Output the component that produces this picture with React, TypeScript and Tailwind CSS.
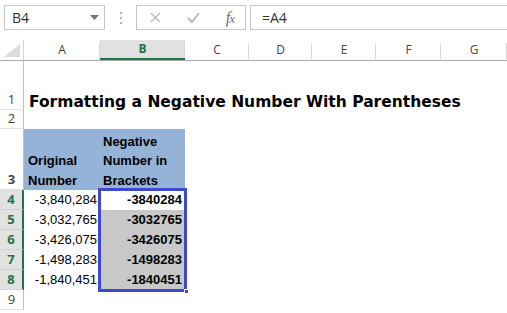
import React from 'react'

const COLS = [
  { key: 'A', w: 'w-[76px]' },
  { key: 'B', w: 'w-[85px]' },
  { key: 'C', w: 'w-[64px]' },
  { key: 'D', w: 'w-[63px]' },
  { key: 'E', w: 'w-[64px]' },
  { key: 'F', w: 'w-[65px]' },
  { key: 'G', w: 'w-[66px]' },
]

const DATA = [
  { n: 4, a: '-3,840,284', b: '-3840284' },
  { n: 5, a: '-3,032,765', b: '-3032765' },
  { n: 6, a: '-3,426,075', b: '-3426075' },
  { n: 7, a: '-1,498,283', b: '-1498283' },
  { n: 8, a: '-1,840,451', b: '-1840451' },
]

const uiFont = "font-['Open_Sans','Noto_Sans',sans-serif]"
const cellFont = "font-['Liberation_Sans',Arial,sans-serif]"

function RowHead({ n, active, h }: { n: number | string; active?: boolean; h: string }) {
  return (
    <div
      className={`w-[24px] shrink-0 ${h} flex items-end justify-center pb-[1px] text-[13px] leading-[18px] ${uiFont} border-b border-[#e1e1e1] ${
        active
          ? 'bg-[#e1e1e1] text-[#217346] font-bold border-r-2 border-r-[#217346] border-b-[#d4d4d4]'
          : 'bg-white text-[#444] border-r border-r-[#c0c0c0]'
      }`}
    >
      {n}
    </div>
  )
}

export default function App() {
  return (
    <div className="w-[507px] h-[313px] bg-white overflow-hidden relative">
      {/* formula bar */}
      <div className="h-[40px] flex items-start pt-[5px] pl-[4px]">
        <div className={`w-[101px] h-[25px] border border-[#c6c6c6] flex items-center justify-between pl-[7px] pr-[5px] text-[14px] text-[#333] ${uiFont}`}>
          <span>B4</span>
          <svg width="9" height="5" viewBox="0 0 9 5"><path d="M0 0h9L4.5 5z" fill="#777" /></svg>
        </div>
        <div className="w-[31px] h-[25px] flex items-center justify-center">
          <div className="flex flex-col gap-[3px]">
            <span className="w-[2px] h-[2px] bg-[#b5b5b5]" />
            <span className="w-[2px] h-[2px] bg-[#b5b5b5]" />
            <span className="w-[2px] h-[2px] bg-[#b5b5b5]" />
          </div>
        </div>
        <div className="w-[110px] h-[25px] border border-[#c6c6c6] flex items-center justify-between pl-[13px] pr-[11px]">
          <svg width="11" height="11" viewBox="0 0 11 11"><path d="M1 1l9 9M10 1l-9 9" stroke="#b8b8b8" strokeWidth="1.4" /></svg>
          <svg width="13" height="11" viewBox="0 0 13 11"><path d="M1 6l4 4 7-9" stroke="#b8b8b8" strokeWidth="2" fill="none" /></svg>
          <span className="text-[16px] leading-none italic text-[#707070] font-['Liberation_Serif',serif] tracking-[-1px]">
            f<span className="text-[13px]">x</span>
          </span>
        </div>
        <div className={`ml-[4px] flex-1 h-[25px] border border-[#c6c6c6] border-r-0 flex items-center pl-[11px] text-[14px] text-[#333] ${uiFont}`}>
          =A4
        </div>
      </div>

      {/* column headers */}
      <div className="flex h-[21px] border-b border-[#ababab]">
        <div className="w-[24px] shrink-0 flex items-end justify-end pr-[3px] pb-[3px] border-r border-[#d4d4d4]">
          <svg width="16" height="13" viewBox="0 0 16 13"><path d="M16 0V13H0z" fill="#dcdcdc" /></svg>
        </div>
        {COLS.map(c => (
          <div
            key={c.key}
            className={`${c.w} shrink-0 flex items-center justify-center text-[12px] ${uiFont} relative ${
              c.key === 'B' ? 'bg-[#e1e1e1] text-[#217346] font-bold border-b-2 border-[#217346]' : 'text-[#444]'
            }`}
          >
            {c.key}
            <span className="absolute right-0 top-[3px] bottom-[1px] w-px bg-[#d8d8d8]" />
          </div>
        ))}
      </div>

      {/* row 1 */}
      <div className="flex h-[49px]">
        <RowHead n={1} h="h-[49px]" />
        <div className="flex items-end pl-[5px] pb-0 whitespace-nowrap text-[15.5px] leading-[16px] font-bold text-black font-['DejaVu_Sans',Verdana,sans-serif]">
          Formatting a Negative Number With Parentheses
        </div>
      </div>

      {/* row 2 */}
      <div className="flex h-[19px]">
        <RowHead n={2} h="h-[19px]" />
      </div>

      {/* row 3 */}
      <div className={`flex h-[61px] text-[13px] font-bold text-black leading-[19.5px] ${cellFont}`}>
        <RowHead n={3} h="h-[61px]" />
        <div className="w-[76px] h-[61px] bg-[#95b3d7] flex items-end pl-[4px] pb-0">
          <span>Original<br />Number</span>
        </div>
        <div className="w-[85px] h-[61px] bg-[#95b3d7] flex items-end pl-[3px] pb-0">
          <span>Negative<br />Number in<br />Brackets</span>
        </div>
      </div>

      {/* data rows */}
      {DATA.map((r, i) => (
        <div key={r.n} className={`flex h-[20px] text-[13px] text-black leading-[20px] ${cellFont}`}>
          <RowHead n={r.n} active h="h-[20px]" />
          <div className="w-[76px] pr-[3px] text-right">{r.a}</div>
          <div className={`w-[85px] pr-[3px] text-right font-bold ${i > 0 ? 'bg-[#c8c8c8]' : 'bg-white'}`}>{r.b}</div>
        </div>
      ))}

      <div className="flex h-[20px]">
        <RowHead n={9} h="h-[20px]" />
      </div>

      {/* selection */}
      <div className="absolute left-[98px] top-[188px] w-[89px] h-[104px] border-[3px] border-[#3f48cc]" />
      <div className="absolute left-[184px] top-[289px] w-[5px] h-[5px] bg-[#3f48cc] border border-white" />
    </div>
  )
}
